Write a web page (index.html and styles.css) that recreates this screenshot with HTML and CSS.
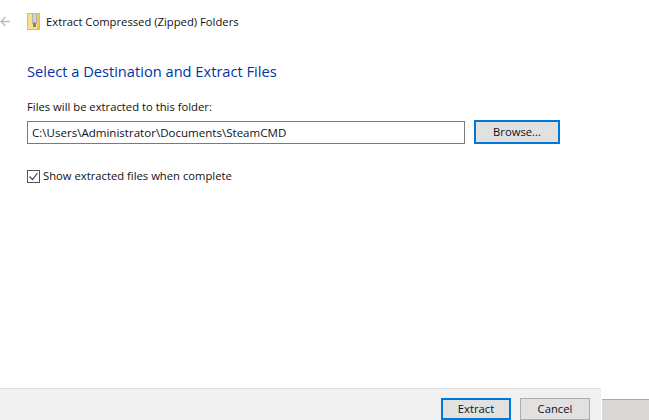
FILE: index.html
```html
<!DOCTYPE html>
<html lang="en">
<head>
<meta charset="utf-8">
<title>Extract Compressed (Zipped) Folders</title>
<link rel="stylesheet" href="styles.css">
</head>
<body>
<div class="page">
  <header class="titlebar">
    <svg class="back" width="10" height="11" viewBox="0 0 10 11"><path d="M10 5.5H1M5.5 1L1 5.5 5.5 10" fill="none" stroke="#bdbdbd" stroke-width="1.4"/></svg>
    <svg class="zipicon" width="13" height="17" viewBox="0 0 13 17">
      <rect x="0.5" y="0.5" width="12" height="16" fill="#fbdf8c" stroke="#e6bc48"/>
      <rect x="5" y="1" width="5" height="10" fill="#b4b3aa"/>
      <path d="M6 2h3M6 4h3M6 6h3M6 8h3" stroke="#f2f2ee" stroke-width="1"/>
      <rect x="6" y="10" width="3" height="4" fill="#85847c"/>
      <rect x="10" y="1" width="2" height="15" fill="#f0c95c"/>
    </svg>
    <span class="title">Extract Compressed (Zipped) Folders</span>
  </header>
  <main class="content">
    <h1 class="heading">Select a Destination and Extract Files</h1>
    <label class="label" for="dest">Files will be extracted to this folder:</label>
    <div class="path-row">
      <input class="path" id="dest" type="text" value="C:\Users\Administrator\Documents\SteamCMD">
      <button class="btn btn-focus btn-browse" type="button">Browse...</button>
    </div>
    <div class="check-row">
      <svg class="check" width="13" height="13" viewBox="0 0 13 13"><rect x="0.5" y="0.5" width="12" height="12" fill="#fff" stroke="#555"/><path d="M2.5 6.5l3 3 5-6.5" fill="none" stroke="#444" stroke-width="1.2"/></svg>
      <span>Show extracted files when complete</span>
    </div>
  </main>
  <div class="bottom">
    <footer class="footer">
      <button class="btn btn-focus btn-foot" type="button">Extract</button>
      <button class="btn btn-foot btn-plain" type="button">Cancel</button>
    </footer>
    <div class="sidebar"></div>
  </div>
</div>
</body>
</html>
```
FILE: styles.css
```css
* { box-sizing: border-box; }
html, body { margin: 0; padding: 0; background: #fff; }
body { font-family: "Open Sans", "Noto Sans", sans-serif; font-size: 11.25px; color: #111; }
.page { width: 649px; height: 420px; display: flex; flex-direction: column; overflow: hidden; }
.titlebar { height: 61px; padding-top: 13px; display: flex; align-items: flex-start; flex: none; }
.back { margin-top: 3px; }
.zipicon { margin-left: 17px; }
.title { margin-left: 6px; line-height: 17px; }
.content { flex: 1; padding: 0 27px; }
.heading { margin: 0; font-size: 14.65px; font-weight: 400; line-height: 20px; color: #0033a5; }
.label { display: block; margin-top: 18px; line-height: 16px; }
.path-row { display: flex; align-items: center; margin-top: 5px; }
.path { width: 438px; height: 23px; border: 1px solid #7a7a7a; padding: 0 4px; font: inherit; font-size: 11.55px; color: #111; outline: none; background: #fff; }
.btn { font: inherit; font-size: 11.25px; color: #111; background: #e1e1e1; border: 1px solid #adadad; padding: 0 0 1px; }
.btn-focus { border: 2px solid #0078d7; }
.btn-browse { width: 86px; height: 24px; margin-left: 9px; }
.check-row { display: flex; align-items: center; margin-top: 24px; gap: 3px; line-height: 16px; }
.bottom { height: 32px; flex: none; display: flex; align-items: flex-end; }
.footer { width: 601px; height: 32px; background: #f0f0f0; border-top: 1px solid #dfdfdf; display: flex; justify-content: flex-end; align-items: flex-start; gap: 9px; padding: 9px 11px 0 0; }
.btn-foot { width: 70px; height: 22px; }
.sidebar { flex: 1; height: 21px; margin-left: 1px; background: #d9d8d7; border-top: 1px solid #a9a9a9; }
```
